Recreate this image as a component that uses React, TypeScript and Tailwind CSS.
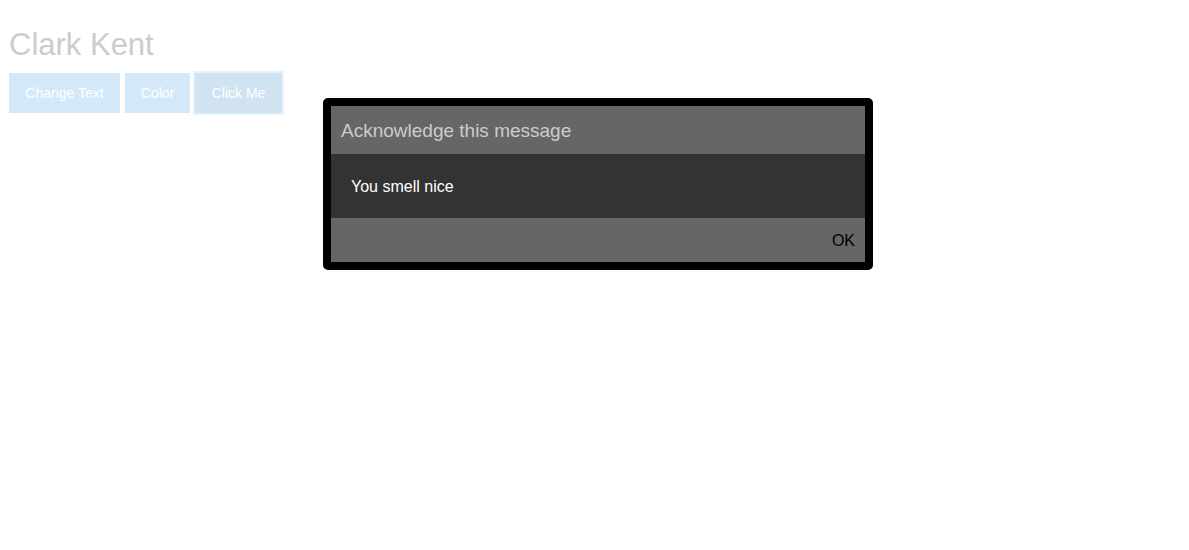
import React from "react";

export default function App() {
  return (
    <div className="relative min-h-[550px] w-full bg-white font-['Liberation_Sans',Arial,sans-serif]">
      <div className="px-[9px] pt-[26px]">
        <h1 className="text-[31px] leading-[37px] text-[#cccccc]">Clark Kent</h1>
        <div className="mt-[10px] flex gap-[5px]">
          <button className="h-10 w-[111px] bg-[#d3e9f9] text-sm text-white">Change Text</button>
          <button className="h-10 w-[65px] bg-[#d3e9f9] text-sm text-white">Color</button>
          <button className="h-10 w-[87px] bg-[#cfe3f1] text-sm text-white outline-2 outline-[#e6f2fc]">
            Click Me
          </button>
        </div>
      </div>

      <div className="absolute left-[323px] top-[98px] w-[550px] rounded-[5px] border-8 border-black">
        <div className="flex h-12 items-center bg-[#666666] px-[10px] pt-[2px] text-[19px] text-[#cccccc]">
          Acknowledge this message
        </div>
        <div className="flex h-16 items-center bg-[#333333] px-5 pt-px text-base text-white">
          You smell nice
        </div>
        <div className="flex h-11 items-center justify-end bg-[#666666] px-[10px] pt-px text-base text-black">
          OK
        </div>
      </div>
    </div>
  );
}
